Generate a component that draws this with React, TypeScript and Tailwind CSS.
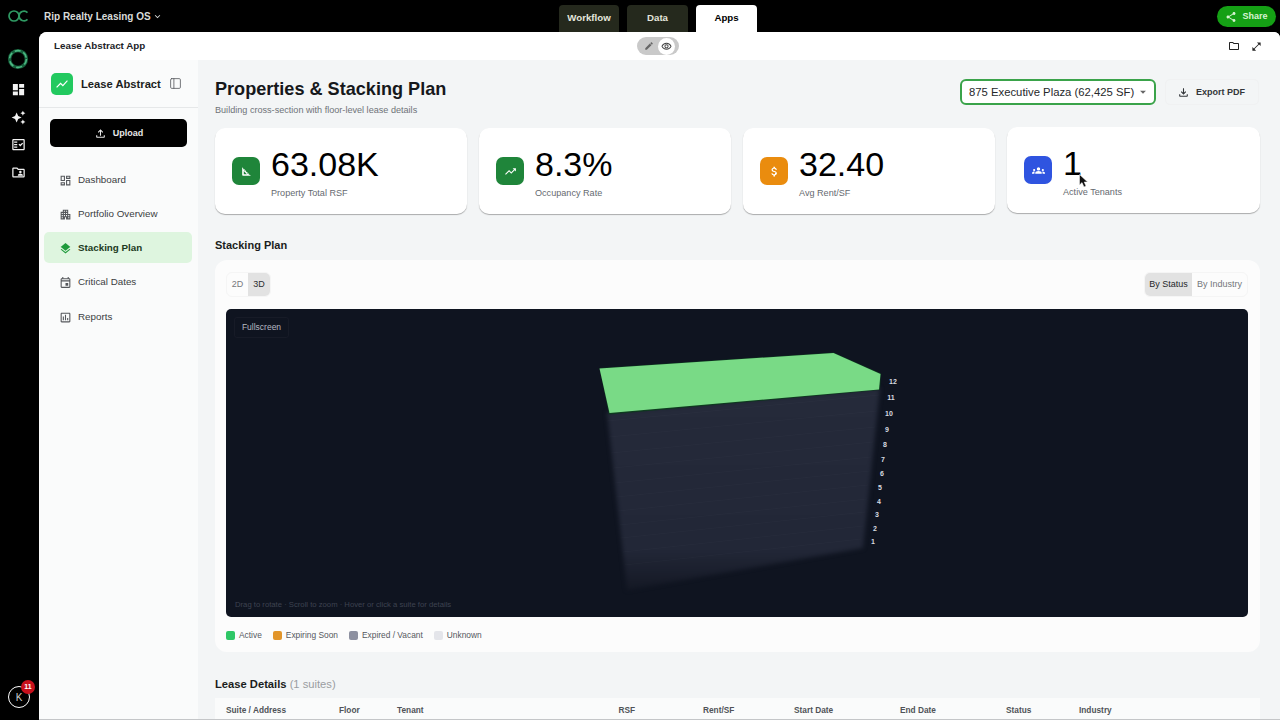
import type { ReactNode } from "react";
import { PanelLeft } from "lucide-react";
import {
  MdApartment,
  MdArrowDropDown,
  MdAttachMoney,
  MdAutoAwesome,
  MdDashboard,
  MdEdit,
  MdGroups,
  MdKeyboardArrowDown,
  MdLayers,
  MdOpenInFull,
  MdOutlineAssessment,
  MdOutlineDashboard,
  MdOutlineEvent,
  MdOutlineFactCheck,
  MdOutlineFileDownload,
  MdOutlineFileUpload,
  MdOutlineFolder,
  MdOutlineFolderShared,
  MdOutlineVisibility,
  MdShare,
  MdShowChart,
  MdSquareFoot,
  MdTrendingUp,
} from "react-icons/md";

const navItems = [
  { label: "Dashboard", icon: <MdOutlineDashboard /> },
  { label: "Portfolio Overview", icon: <MdApartment /> },
  { label: "Stacking Plan", icon: <MdLayers />, active: true },
  { label: "Critical Dates", icon: <MdOutlineEvent /> },
  { label: "Reports", icon: <MdOutlineAssessment /> },
];

const floors = [
  { n: 12, x: 893, y: 381 },
  { n: 11, x: 891, y: 397 },
  { n: 10, x: 889, y: 413 },
  { n: 9, x: 887, y: 429 },
  { n: 8, x: 885, y: 444 },
  { n: 7, x: 883, y: 459 },
  { n: 6, x: 882, y: 473 },
  { n: 5, x: 880, y: 487 },
  { n: 4, x: 879, y: 501 },
  { n: 3, x: 877, y: 514 },
  { n: 2, x: 875, y: 528 },
  { n: 1, x: 873, y: 541 },
];

const legend = [
  { label: "Active", color: "bg-[#2fc766]" },
  { label: "Expiring Soon", color: "bg-[#e2952a]" },
  { label: "Expired / Vacant", color: "bg-[#8d90a0]" },
  { label: "Unknown", color: "bg-[#e4e5ea]" },
];

function StatCard({
  icon,
  color,
  value,
  label,
  lifted,
}: {
  icon: ReactNode;
  color: string;
  value: string;
  label: string;
  lifted?: boolean;
}) {
  return (
    <div
      className={`flex h-[86px] items-center rounded-[10px] bg-white pl-[17px] shadow-[0_1px_1px_rgba(0,0,0,0.3)] ${
        lifted ? "-translate-y-px" : ""
      }`}
    >
      <div className={`flex size-7 items-center justify-center rounded-[7px] text-[13px] text-white ${color}`}>{icon}</div>
      <div className="ml-[11px] mt-[1px]">
        <div className="text-[34px] leading-[38px] text-black">{value}</div>
        <div className="mt-[4px] text-[9.1px] leading-[12px] text-[#666a70]">{label}</div>
      </div>
    </div>
  );
}

export default function App() {
  return (
    <div className="relative flex h-screen w-full flex-col overflow-hidden bg-black font-['Liberation_Sans',Arial,sans-serif]">
      {/* top bar */}
      <header className="relative flex h-8 shrink-0 items-center">
        <svg className="ml-[8px] h-[12px] w-[21px]" viewBox="0 0 21 12" fill="none" stroke="#2f9a63" strokeWidth="1.7">
          <circle cx="6" cy="6" r="5" />
          <path d="M19.5 2.6A5 5 0 0 0 11 6A5 5 0 0 0 19.5 9.4" />
        </svg>
        <span className="ml-[15px] text-[10px] font-bold text-[#d9dbd9]">Rip Realty Leasing OS</span>
        <MdKeyboardArrowDown className="ml-px text-[11px] text-[#d9dbd9]" />
        <nav className="absolute bottom-0 left-[559px] flex items-end gap-2 text-[9.7px] font-bold">
          <div className="flex h-[27px] w-[60px] items-center justify-center rounded-t-[4px] bg-[#25291d] text-[#e4e6dc]">Workflow</div>
          <div className="flex h-[27px] w-[61px] items-center justify-center rounded-t-[4px] bg-[#25291d] text-[#e4e6dc]">Data</div>
          <div className="flex h-[27px] w-[61px] items-center justify-center rounded-t-[4px] bg-white text-black">Apps</div>
        </nav>
        <button className="absolute left-[1217px] top-[6px] flex h-[21px] w-[59px] items-center justify-center gap-[5px] rounded-full bg-[#15a015] text-[9px] font-bold text-[#d7f3d2]">
          <MdShare className="text-[12px]" />
          Share
        </button>
      </header>

      <div className="flex min-h-0 flex-1">
        {/* app rail */}
        <aside className="relative flex w-[39px] shrink-0 flex-col items-center text-[#f2f2f2]">
          <svg className="mt-[16px] size-[22px] -translate-x-[2px]" viewBox="0 0 22 22" fill="none">
            <circle cx="11" cy="11" r="8.4" stroke="#17603c" strokeWidth="3.4" />
            <circle cx="11" cy="11" r="8.4" stroke="#4cb883" strokeWidth="1.6" strokeDasharray="6 3" />
          </svg>
          <MdDashboard className="mt-[12px] text-[15px] -translate-x-[1px]" />
          <MdAutoAwesome className="mt-[13px] text-[15px] -translate-x-[1px]" />
          <MdOutlineFactCheck className="mt-[12px] text-[15px] -translate-x-[1px]" />
          <MdOutlineFolderShared className="mt-[13px] text-[15px] -translate-x-[1px]" />
          <div className="absolute left-[8px] top-[654px] flex size-[22px] items-center justify-center rounded-full border border-white text-[10px] text-[#cfcfcf]">
            K
            <span className="absolute -right-[6px] -top-[7px] flex size-[14px] items-center justify-center rounded-full bg-[#c8101c] text-[7px] font-bold text-white">
              11
            </span>
          </div>
        </aside>

        {/* app window */}
        <div className="flex h-[688px] min-w-0 flex-1 flex-col overflow-hidden rounded-tl-[8px] rounded-tr-[6px] border-b border-[#c4c6c8] bg-[#f3f5f6]">
          <div className="relative flex h-7 shrink-0 items-center bg-white pl-[15px] pr-[18px]">
            <span className="pt-px text-[9.8px] font-bold text-[#202226]">Lease Abstract App</span>
            <div className="absolute left-[598px] top-[5px] flex h-[18px] w-[42px] items-center rounded-full bg-[#c9c9c9] pl-[7px]">
              <MdEdit className="text-[10px] text-[#666]" />
              <span className="ml-[4px] flex size-[17px] items-center justify-center rounded-full bg-white">
                <MdOutlineVisibility className="text-[11px] text-[#444]" />
              </span>
            </div>
            <div className="ml-auto flex items-center gap-[11px] text-[#222]">
              <MdOutlineFolder className="text-[12px]" />
              <MdOpenInFull className="text-[11px]" />
            </div>
          </div>

          <div className="flex min-h-0 flex-1">
            {/* sidebar */}
            <aside className="flex w-[159px] shrink-0 flex-col bg-[#fafbfb]">
              <div className="flex h-12 shrink-0 items-center border-b border-[#e6e8e9] pl-[12px]">
                <div className="flex size-[22px] items-center justify-center rounded-[5px] bg-[#22c95f] text-white">
                  <MdShowChart className="text-[14px]" />
                </div>
                <span className="ml-2 pt-px text-[11.2px] font-bold text-[#1b1d20]">Lease Abstract</span>
                <PanelLeft className="ml-2 size-[13px] text-[#55585c]" strokeWidth={1.5} />
              </div>
              <button className="mx-[11px] mt-[11px] flex h-[28px] w-[137px] items-center justify-center gap-[6px] rounded-[5px] bg-black pt-px text-[9px] font-bold text-[#e8e8e8]">
                <MdOutlineFileUpload className="text-[13px]" />
                Upload
              </button>
              <nav className="mx-[5px] mt-[16.5px] flex w-[148px] flex-col gap-[3.25px]">
                {navItems.map((item) => (
                  <div
                    key={item.label}
                    className={`flex h-[31px] items-center rounded-[5px] pl-[15px] pt-[2px] text-[9.8px] ${
                      item.active ? "bg-[#def5df] font-bold text-[#1c3a22]" : "text-[#3a3d42]"
                    }`}
                  >
                    <span className={`mr-[6px] text-[13px] ${item.active ? "text-[#1f9a3c]" : "text-[#55585c]"}`}>{item.icon}</span>
                    {item.label}
                  </div>
                ))}
              </nav>
            </aside>

            {/* main */}
            <main className="min-w-0 flex-1 overflow-hidden pl-[17px] pr-[20px]">
              <div className="flex h-[68px] items-start justify-between pt-[19px]">
                <div>
                  <h1 className="text-[18.1px] font-bold leading-[20px] text-[#16181b]">Properties &amp; Stacking Plan</h1>
                  <p className="mt-[5px] text-[9.1px] leading-[12px] text-[#6f7378]">Building cross-section with floor-level lease details</p>
                </div>
                <div className="flex items-center gap-[9px] pr-px">
                  <div className="flex h-[26px] w-[196px] items-center rounded-[6px] border-2 border-[#3aa34a] bg-white pl-[7px] text-[11.3px] text-[#26282b]">
                    875 Executive Plaza (62,425 SF)
                    <MdArrowDropDown className="ml-[2px] text-[14px] text-[#666]" />
                  </div>
                  <button className="flex h-[26px] w-[94px] items-center justify-center gap-[6px] rounded-[5px] border border-[#f0f1f2] pt-px text-[9px] font-bold text-[#33363a]">
                    <MdOutlineFileDownload className="-ml-[2px] text-[13px]" />
                    Export PDF
                  </button>
                </div>
              </div>

              <div className="grid grid-cols-[252px_252px_252px_253px] gap-3">
                <StatCard icon={<MdSquareFoot />} color="bg-[#1f853a]" value="63.08K" label="Property Total RSF" />
                <StatCard icon={<MdTrendingUp />} color="bg-[#1f853a]" value="8.3%" label="Occupancy Rate" />
                <StatCard icon={<MdAttachMoney />} color="bg-[#ea8c0e]" value="32.40" label="Avg Rent/SF" />
                <StatCard icon={<MdGroups />} color="bg-[#2f54e0]" value="1" label="Active Tenants" lifted />
              </div>

              <h2 className="mt-[24px] text-[11px] font-bold leading-[14px] text-[#1b1d20]">Stacking Plan</h2>

              <section className="mt-[8px] h-[392px] rounded-[12px] bg-[#fcfcfc] pl-[11px] pr-[12px] pt-[12px]">
                <div className="flex items-center justify-between">
                  <div className="flex h-[25px] overflow-hidden rounded-[6px] border border-[#f5f5f5] text-[9px]">
                    <span className="flex w-[21px] items-center justify-center text-[#77797d]">2D</span>
                    <span className="flex w-[22px] items-center justify-center bg-[#e2e2e2] text-[#2b2d30]">3D</span>
                  </div>
                  <div className="flex h-[25px] overflow-hidden rounded-[6px] border border-[#f5f5f5] text-[9px]">
                    <span className="flex w-[47px] items-center justify-center bg-[#e2e2e2] text-[#25272a]">By Status</span>
                    <span className="flex w-[55px] items-center justify-center text-[#74777b]">By Industry</span>
                  </div>
                </div>

                <div className="relative mt-[12px] h-[308px] overflow-hidden rounded-[5px] bg-[#0f1420]">
                  <svg className="absolute inset-0 size-full" viewBox="226 309 1022 308">
                    <defs>
                      <linearGradient id="body" gradientUnits="userSpaceOnUse" x1="745" y1="400" x2="745" y2="592">
                        <stop offset="0" stopColor="#252a3a" />
                        <stop offset="0.78" stopColor="#222737" />
                        <stop offset="1" stopColor="#141824" />
                      </linearGradient>
                    </defs>
                    <polygon className="blur-[2px]" points="607,412 880,388 863,548 627,590" fill="url(#body)" />
                    {floors.slice(1).map((f) => (
                      <line
                        key={f.n}
                        x1={607 + (f.y - 397) * 0.12}
                        y1={f.y + 24}
                        x2={f.x - 12}
                        y2={f.y - 2}
                        stroke="#ffffff"
                        strokeOpacity="0.02"
                      />
                    ))}
                    <polygon points="599.5,368 833.5,352.5 881,373.5 880,390 609,414.5" fill="#0e3a1f" />
                    <polygon points="599.5,368.5 833.5,353 880.5,374 879,389.5 609.5,413" fill="#79da86" />
                    {floors.map((f) => (
                      <text key={f.n} x={f.x} y={f.y + 2.5} textAnchor="middle" fontSize="7" fontWeight="700" fill="#d8dbe0">
                        {f.n}
                      </text>
                    ))}
                  </svg>
                  <button className="absolute left-[8px] top-[8px] h-[21px] w-[55px] rounded-[3px] border border-[#171b27] text-[8.5px] text-[#b6b9c0]">
                    Fullscreen
                  </button>
                  <p className="absolute bottom-[7px] left-[9px] text-[7.7px] leading-[10px] text-[#3e4350]">
                    Drag to rotate · Scroll to zoom · Hover or click a suite for details
                  </p>
                </div>

                <div className="mt-[13px] flex items-center gap-[11px] text-[8.4px] leading-[10px] text-[#55585e]">
                  {legend.map((l) => (
                    <div key={l.label} className="flex items-center gap-[4px]">
                      <span className={`size-[9px] rounded-[2px] ${l.color}`} />
                      {l.label}
                    </div>
                  ))}
                </div>
              </section>

              <h2 className="mt-[25px] text-[11.2px] font-bold leading-[14px] text-[#1b1d20]">
                Lease Details <span className="font-normal text-[#9a9da1]">(1 suites)</span>
              </h2>

              <div className="mt-[7px] grid h-[24px] grid-cols-[113px_58px_203px_103px_91px_106px_106px_73px_1fr] items-center bg-[#fafbfb] pl-[11px] text-[8.3px] font-bold text-[#505358]">
                <span>Suite / Address</span>
                <span>Floor</span>
                <span>Tenant</span>
                <span className="pr-[68px] text-right">RSF</span>
                <span>Rent/SF</span>
                <span>Start Date</span>
                <span>End Date</span>
                <span>Status</span>
                <span>Industry</span>
              </div>
            </main>
          </div>
        </div>
      </div>

      {/* mouse pointer */}
      <svg className="absolute left-[1079px] top-[174px] h-[14px] w-[10px]" viewBox="0 0 10 14">
        <path d="M0.5 0.5V11L3 8.6L5 13L7 12L5.2 8H8.6Z" fill="#111" stroke="#fff" strokeWidth="0.5" />
      </svg>
    </div>
  );
}
